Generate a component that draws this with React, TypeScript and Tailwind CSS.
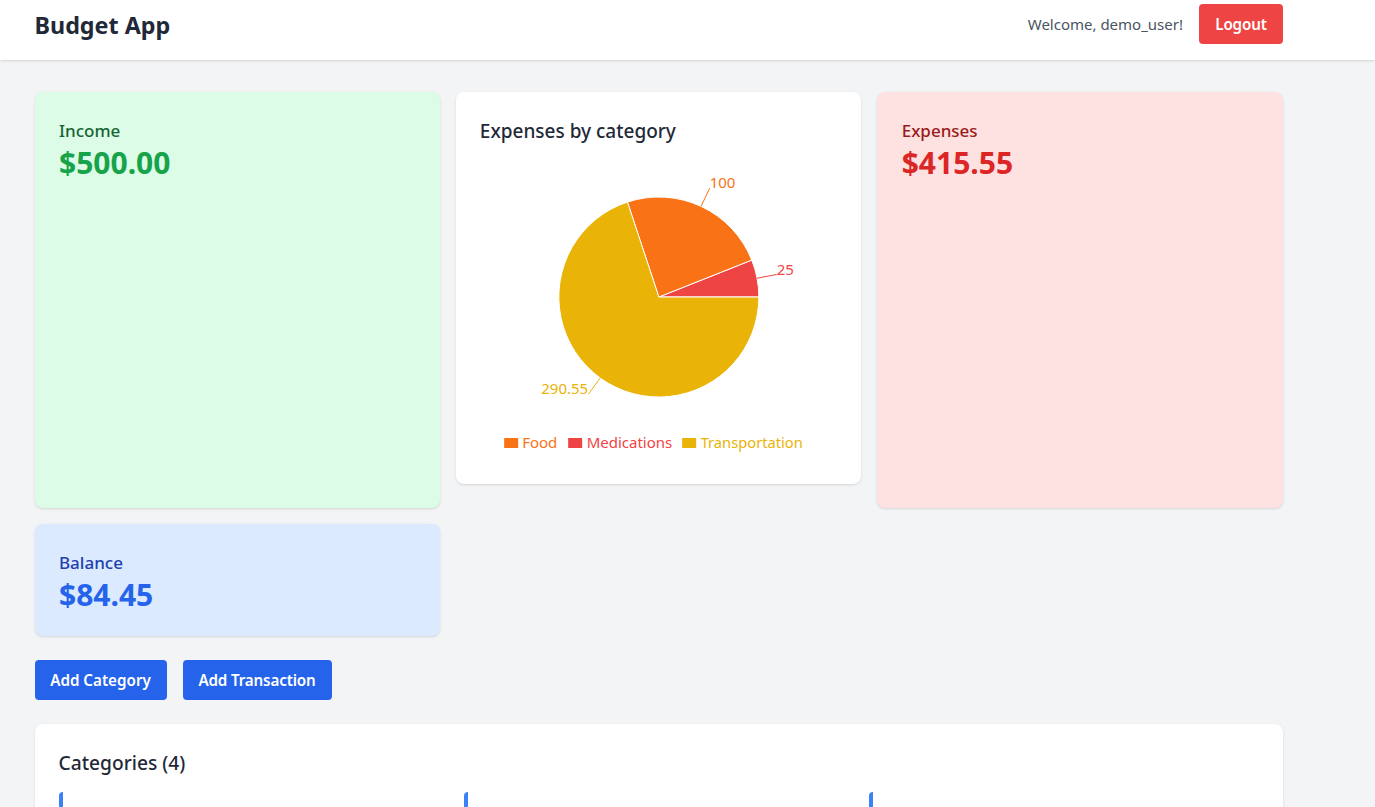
const font = "font-['Noto_Sans',sans-serif]";

function StatCard({ label, value, bg, labelColor, valueColor, extra }: { label: string; value: string; bg: string; labelColor: string; valueColor: string; extra?: string }) {
  return (
    <div className={`${bg} ${extra ?? ""} rounded-lg py-6 pr-6 pl-[24.5px] shadow`}>
      <h3 className={`-mb-0.5 text-[17px] leading-[30px] font-medium ${labelColor}`}>{label}</h3>
      <p className={`-mb-0.5 text-3xl leading-[38px] font-bold ${valueColor}`}>{value}</p>
    </div>
  );
}

function Pie() {
  const f = { fontFamily: "inherit", fontSize: 15 };
  return (
    <svg viewBox="0 0 357 300" className="block h-[300px] w-full">
      <g stroke="#fff" strokeWidth="1">
        <path d="M178.67 137 L278.67 137 A100 100 0 0 0 271.6 100.1 Z" fill="#EF4444" />
        <path d="M178.67 137 L271.6 100.1 A100 100 0 0 0 147.3 42.05 Z" fill="#F97316" />
        <path d="M178.67 137 L147.3 42.05 A100 100 0 1 0 278.67 137 Z" fill="#EAB308" />
      </g>
      <g fill="none" strokeWidth="1">
        <path d="M220.9 46.4 L229.4 28.3" stroke="#F97316" />
        <path d="M276.9 118.2 L296.5 114.5" stroke="#EF4444" />
        <path d="M120 218 L108.3 234.2" stroke="#EAB308" />
      </g>
      <g style={f}>
        <text x="229.5" y="28" fill="#F97316">100</text>
        <text x="296.5" y="115" fill="#EF4444">25</text>
        <text x="108" y="234" fill="#EAB308" textAnchor="end">290.55</text>
        <rect x="24" y="278" width="14" height="10" fill="#F97316" />
        <text x="42" y="288" fill="#F97316">Food</text>
        <rect x="88" y="278" width="14" height="10" fill="#EF4444" />
        <text x="106.5" y="288" fill="#EF4444">Medications</text>
        <rect x="202" y="278" width="14" height="10" fill="#EAB308" />
        <text x="220.5" y="288" fill="#EAB308" fontSize="14.7">Transportation</text>
      </g>
    </svg>
  );
}

export default function App() {
  return (
    <div className={`h-screen overflow-hidden bg-[#f3f4f6] ${font} text-[#1f2937]`}>
      <header className="h-[60px] bg-white shadow">
        <div className="flex h-full w-[1283px] items-start justify-between pl-[34.5px]">
          <h1 className="mt-[9px] text-[23.3px] leading-8 font-bold">Budget App</h1>
          <div className="mt-1 flex items-center gap-4">
            <span className="text-[15px] text-[#4b5563]">Welcome, demo_user!</span>
            <button className="h-10 w-[84px] rounded bg-[#ef4444] text-[15.2px] tracking-[-0.15px] font-semibold text-white">Logout</button>
          </div>
        </div>
      </header>
      <main className="w-[1282.5px] pl-[34.5px] pt-8">
        <div className="grid grid-cols-3 gap-4">
          <StatCard label="Income" value="$500.00" bg="bg-[#dcfce7]" labelColor="text-[#166534]" valueColor="text-[#16a34a]" extra="h-[416px]" />
          <div className="self-start rounded-lg bg-white p-6 shadow">
            <h3 className="mb-3.5 text-[19px] leading-[30px] font-medium">Expenses by category</h3>
            <Pie />
          </div>
          <StatCard label="Expenses" value="$415.55" bg="bg-[#fee2e2]" labelColor="text-[#991b1b]" valueColor="text-[#dc2626]" />
          <StatCard label="Balance" value="$84.45" bg="bg-[#dbeafe]" labelColor="text-[#1e40af]" valueColor="text-[#2563eb]" />
        </div>
        <div className="mt-6 flex gap-4">
          <button className="h-10 w-[132px] rounded bg-[#2563eb] text-[15.2px] font-semibold text-white">Add Category</button>
          <button className="h-10 w-[149px] rounded bg-[#2563eb] text-[15.2px] tracking-[-0.15px] font-semibold text-white">Add Transaction</button>
        </div>
        <section className="mt-6 rounded-lg bg-white p-6 shadow">
          <h2 className="mb-3.5 text-[19.2px] leading-[30px] font-medium">Categories (4)</h2>
          <div className="grid grid-cols-3 gap-4">
            <div className="h-24 rounded border-l-4 border-[#3b82f6]" />
            <div className="h-24 rounded border-l-4 border-[#3b82f6]" />
            <div className="h-24 rounded border-l-4 border-[#3b82f6]" />
          </div>
        </section>
      </main>
    </div>
  );
}
